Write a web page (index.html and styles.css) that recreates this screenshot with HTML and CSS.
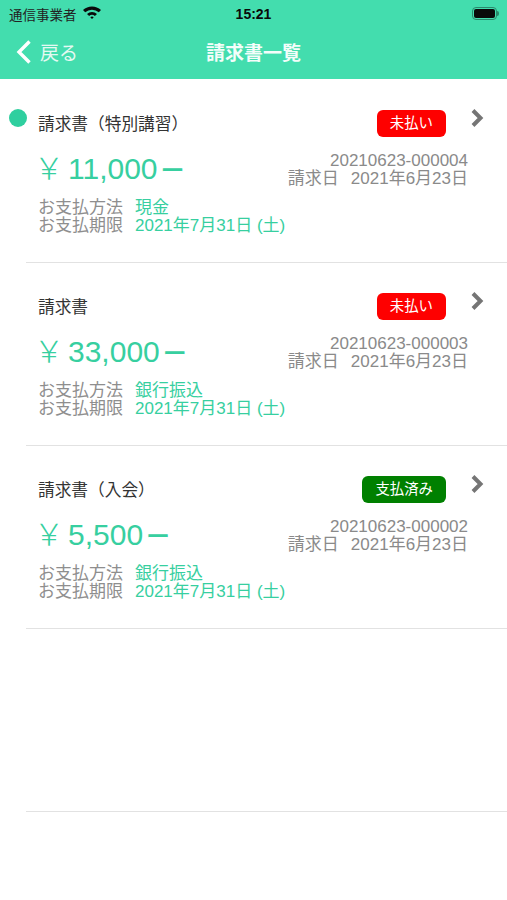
FILE: index.html
```html
<!DOCTYPE html>
<html lang="ja">
<head>
  <meta charset="UTF-8">
  <title>請求書一覧</title>
  <meta name="viewport" content="width=device-width, initial-scale=1.0">
  <link rel="stylesheet" href="styles.css">
</head>
<body>

  <header class="top-bar">
    <div class="status-bar">
      <div class="carrier">
        <span>通信事業者</span>
        <svg class="wifi" viewBox="0 0 20 14" width="20" height="14">
          <path d="M1 5 A13 13 0 0 1 19 5 L16.8 7.3 A10 10 0 0 0 3.2 7.3 Z" fill="#0a0a0a"/>
          <path d="M5 9 A7.4 7.4 0 0 1 15 9 L12.9 11 A4.4 4.4 0 0 0 7.1 11 Z" fill="#0a0a0a"/>
          <path d="M8.3 12.2 A2.6 2.6 0 0 1 11.7 12.2 L10 14 Z" fill="#0a0a0a"/>
        </svg>
      </div>
      <div class="clock">15:21</div>
      <div class="battery"><span class="battery-level"></span></div>
    </div>
    <nav class="nav-bar">
      <div class="back">
        <svg viewBox="0 0 16 26" width="16" height="26">
          <path d="M13.5 2.5 L3 13 L13.5 23.5" fill="none" stroke="#fff" stroke-width="3.4"/>
        </svg>
        <span>戻る</span>
      </div>
      <div class="nav-title">請求書一覧</div>
    </nav>
  </header>

  <main class="invoice-list">

    <div class="invoice-row">
      <span class="unread-dot"></span>
      <div class="row-head">
        <div class="invoice-name">請求書（特別講習）</div>
        <span class="badge badge-unpaid">未払い</span>
        <svg class="chevron" viewBox="0 0 14 20" width="14" height="20"><path d="M3 2.5 L10.5 10 L3 17.5" fill="none" stroke="#757575" stroke-width="4"/></svg>
      </div>
      <div class="row-mid">
        <div class="amount"><span class="yen">￥</span>11,000<span class="dash">ー</span></div>
        <div class="issue">
          <div>20210623-000004</div>
          <div>請求日<span class="issue-date">2021年6月23日</span></div>
        </div>
      </div>
      <div class="pay-info">
        <div class="pay-line"><span class="pay-label">お支払方法</span><span class="pay-value">現金</span></div>
        <div class="pay-line"><span class="pay-label">お支払期限</span><span class="pay-value">2021年7月31日 (土)</span></div>
      </div>
    </div>

    <div class="invoice-row">
      <div class="row-head">
        <div class="invoice-name">請求書</div>
        <span class="badge badge-unpaid">未払い</span>
        <svg class="chevron" viewBox="0 0 14 20" width="14" height="20"><path d="M3 2.5 L10.5 10 L3 17.5" fill="none" stroke="#757575" stroke-width="4"/></svg>
      </div>
      <div class="row-mid">
        <div class="amount"><span class="yen">￥</span>33,000<span class="dash">ー</span></div>
        <div class="issue">
          <div>20210623-000003</div>
          <div>請求日<span class="issue-date">2021年6月23日</span></div>
        </div>
      </div>
      <div class="pay-info">
        <div class="pay-line"><span class="pay-label">お支払方法</span><span class="pay-value">銀行振込</span></div>
        <div class="pay-line"><span class="pay-label">お支払期限</span><span class="pay-value">2021年7月31日 (土)</span></div>
      </div>
    </div>

    <div class="invoice-row">
      <div class="row-head">
        <div class="invoice-name">請求書（入会）</div>
        <span class="badge badge-paid">支払済み</span>
        <svg class="chevron" viewBox="0 0 14 20" width="14" height="20"><path d="M3 2.5 L10.5 10 L3 17.5" fill="none" stroke="#757575" stroke-width="4"/></svg>
      </div>
      <div class="row-mid">
        <div class="amount"><span class="yen">￥</span>5,500<span class="dash">ー</span></div>
        <div class="issue">
          <div>20210623-000002</div>
          <div>請求日<span class="issue-date">2021年6月23日</span></div>
        </div>
      </div>
      <div class="pay-info">
        <div class="pay-line"><span class="pay-label">お支払方法</span><span class="pay-value">銀行振込</span></div>
        <div class="pay-line"><span class="pay-label">お支払期限</span><span class="pay-value">2021年7月31日 (土)</span></div>
      </div>
    </div>

    <div class="invoice-row empty-row"></div>

  </main>

</body>
</html>
```

FILE: styles.css
```css
body {
  margin: 0;
  font-family: "Liberation Sans", "Noto Sans CJK JP", sans-serif;
  background-color: #fff;
  color: #333;
  overflow-x: hidden;
}

.top-bar {
  background-color: #43ddae;
  height: 79px;
  box-sizing: border-box;
}

.status-bar {
  display: flex;
  align-items: center;
  justify-content: space-between;
  height: 27px;
  padding: 0 10px 0 9px;
  position: relative;
  color: #0a0a0a;
}

.carrier {
  display: flex;
  align-items: center;
  gap: 5px;
  font-size: 13.5px;
  color: #222;
}

.wifi {
  margin-top: -3px;
}

.clock {
  position: absolute;
  left: 0;
  right: 0;
  text-align: center;
  font-size: 14px;
  font-weight: bold;
}

.battery {
  width: 25px;
  height: 13px;
  box-sizing: border-box;
  border: 1px solid #2a8a6d;
  border-radius: 4px;
  padding: 1px;
  position: relative;
}

.battery::after {
  content: "";
  position: absolute;
  right: -3px;
  top: 3px;
  width: 2px;
  height: 5px;
  background-color: #2a8a6d;
  border-radius: 0 2px 2px 0;
}

.battery-level {
  display: block;
  height: 100%;
  background-color: #0a0a0a;
  border-radius: 2px;
}

.nav-bar {
  display: flex;
  align-items: center;
  justify-content: center;
  height: 48px;
  position: relative;
}

.back {
  position: absolute;
  left: 16px;
  top: 11px;
  display: flex;
  align-items: center;
  gap: 8px;
  font-size: 19px;
  color: #e4f9f2;
}

.nav-title {
  font-size: 19px;
  font-weight: bold;
  color: #f4fdfa;
}

.invoice-list {
  padding-top: 1px;
}

.invoice-row {
  height: 183px;
  box-sizing: border-box;
  margin-left: 26px;
  padding: 29px 23px 0 12px;
  border-bottom: 1px solid #e2e2e2;
  position: relative;
}

.empty-row {
  padding: 0;
}

.unread-dot {
  position: absolute;
  left: -17px;
  top: 29px;
  width: 18px;
  height: 18px;
  border-radius: 50%;
  background-color: #2fcf9f;
}

.row-head {
  display: flex;
  align-items: center;
  height: 28px;
}

.invoice-name {
  flex: 1;
  font-size: 16.7px;
  color: #333;
}

.badge {
  display: block;
  height: 27px;
  line-height: 27px;
  padding: 0 13px;
  border-radius: 6px;
  font-size: 14.4px;
  color: #fff;
  margin-right: 24px;
}

.badge-unpaid {
  background-color: #fe0000;
}

.badge-paid {
  background-color: #008000;
}

.chevron {
  margin-top: -11px;
}

.row-mid {
  display: flex;
  justify-content: space-between;
  align-items: flex-start;
  margin-top: 14px;
  padding-right: 16px;
}

.amount {
  font-size: 30px;
  font-weight: 300;
  color: #37cfa0;
  line-height: 36px;
  margin-left: -4px;
}

.yen {
  margin-right: 4px;
}

.dash {
  font-size: 24px;
  font-weight: 500;
  margin-left: 3px;
}

.issue {
  font-size: 17px;
  line-height: 18px;
  color: #8a8a8a;
  text-align: right;
  margin-top: 1px;
}

.issue-date {
  margin-left: 12px;
}

.pay-info {
  margin-top: 10px;
  font-size: 17px;
  line-height: 18px;
}

.pay-line {
  display: flex;
}

.pay-label {
  width: 97px;
  color: #8e8e8e;
}

.pay-value {
  color: #37cfa0;
}
```
